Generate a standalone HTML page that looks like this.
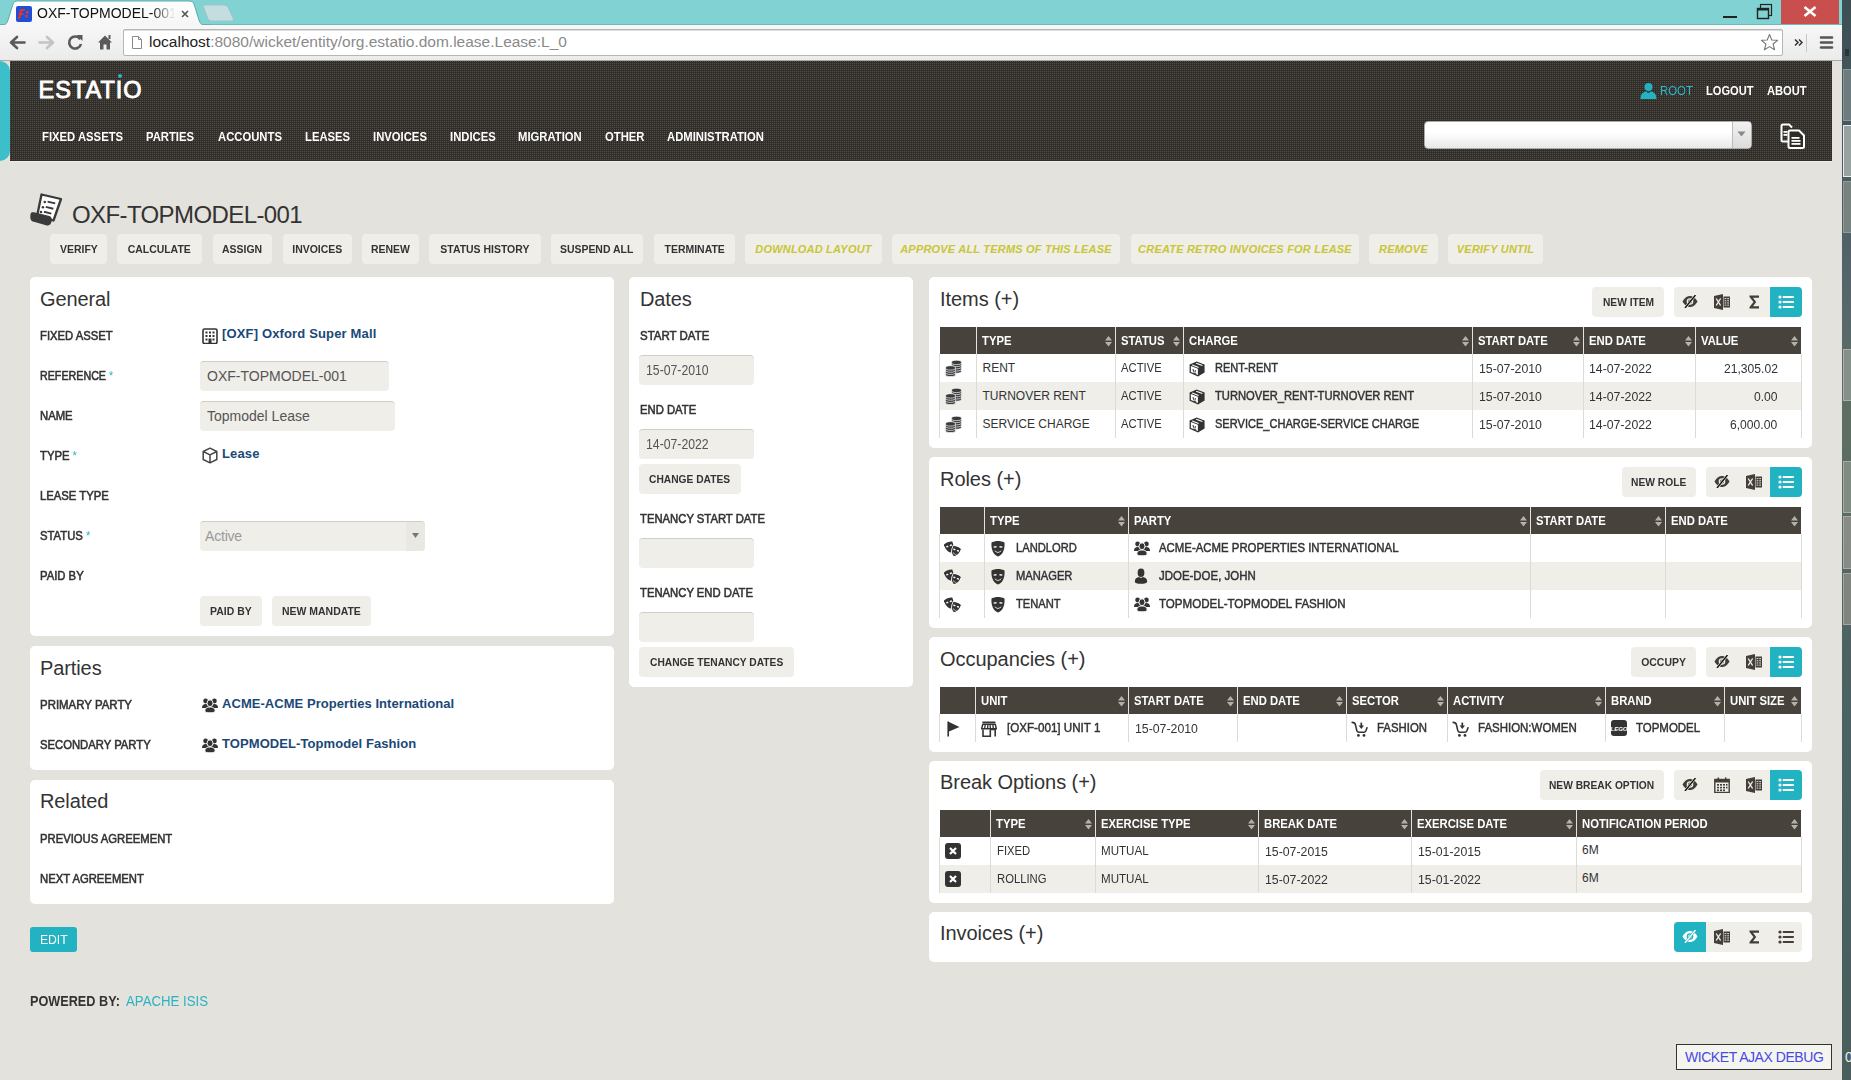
<!DOCTYPE html><html><head><meta charset="utf-8"><title>OXF-TOPMODEL-001</title><style>
*{box-sizing:border-box;margin:0;padding:0}
html,body{width:1851px;height:1080px;overflow:hidden}
body{position:relative;font-family:"Liberation Sans",sans-serif;background:#e3e2dc;color:#333}
.a{position:absolute}
.t{position:absolute;white-space:nowrap;line-height:1}
.p{position:absolute;background:#fff;border-radius:5px}
.b{position:absolute;background:#efeee9;border-radius:4px;font-size:11px;font-weight:bold;line-height:30px;height:30px;color:#333;text-align:center;white-space:nowrap}
.hdr{background-color:#312c28;background-image:radial-gradient(circle at 1px 1px, rgba(255,255,255,.10) 0.6px, transparent 0.9px);background-size:2px 2px}
</style></head><body>
<div class="a" style="left:1842px;top:0px;width:9px;height:1080px;background:linear-gradient(#3c4f55 0px,#56676a 300px,#5f6e62 420px,#5a6a64 520px,#4c6362 650px,#486060 900px,#4a5e5c 1080px);"></div>
<div class="a" style="left:1843px;top:69px;width:8px;height:52px;background:#6f7c7e;border:1px solid #8b9799;border-right:none"></div>
<div class="a" style="left:1843px;top:125px;width:8px;height:52px;background:#9aa2a1;border:1px solid #e8ecec;border-right:none"></div>
<div class="a" style="left:1843px;top:181px;width:8px;height:52px;background:#78827f;border:1px solid #929b98;border-right:none"></div>
<div class="a" style="left:1843px;top:349px;width:8px;height:52px;background:#878f8b;border:1px solid #a9b0ac;border-right:none"></div>
<div class="a" style="left:1843px;top:461px;width:8px;height:52px;background:#808b81;border:1px solid #a3ada3;border-right:none"></div>
<div class="a" style="left:1843px;top:516px;width:8px;height:53px;background:#878c86;border:1px solid #a7aca6;border-right:none"></div>
<div class="a" style="left:1843px;top:573px;width:8px;height:52px;background:#80867f;border:1px solid #a2a8a1;border-right:none"></div>
<div class="a" style="left:1845px;top:49px;width:4px;height:7px;background:#2a3538;"></div>
<div class="a" style="left:0px;top:0px;width:1842px;height:25px;background:#80d3d2;"></div>
<div class="a" style="left:0px;top:24px;width:1842px;height:1px;background:#6bbab9;"></div>
<svg class="a" style="left:0px;top:0px;" width="220" height="26" viewBox="0 0 220 26"><path d="M0 25 L2 25 C6 25 7 23 8 20 L13 4 C14 2 15 1 18 1 L189 1 C192 1 193 2 194 4 L199 20 C200 23 201 25 205 25 L210 25 L210 26 L0 26Z" fill="url(#tabg)" stroke="#5fa9a9" stroke-width="1"/><defs><linearGradient id="tabg" x1="0" y1="0" x2="0" y2="1"><stop offset="0" stop-color="#fff"/><stop offset="1" stop-color="#f5f5f5"/></linearGradient></defs></svg>
<svg class="a" style="left:200px;top:4px;" width="36" height="18" viewBox="0 0 36 18"><path d="M3 2 C3 1 4 1 5 1 L24 1 C26 1 27 2 28 3 L33 14 C34 16 33 17 31 17 L12 17 C10 17 9 16 8 15 Z" fill="#c4dde0" stroke="#9fc4c7" stroke-width="1"/></svg>
<svg class="a" style="left:16px;top:6px;" width="16" height="16" viewBox="0 0 16 16"><rect x="0" y="0" width="16" height="16" rx="2" fill="#1f4fd8"/><path d="M4 3 L9 3 L8.4 5 L6 5 L5.6 7 L7.6 7 L7 9 L5 9 L4 13 L2 13 Z" fill="#e8351e"/><rect x="10" y="5" width="2.6" height="2.6" fill="#e8351e"/><rect x="9.2" y="9" width="2.6" height="2.6" fill="#e8351e"/></svg>
<div class="t" style="left:37px;top:4.5px;font-size:14px;color:#111;width:138px;overflow:hidden;line-height:16px;-webkit-mask-image:linear-gradient(90deg,#000 84%,transparent);">OXF-TOPMODEL-001</div>
<svg class="a" style="left:181px;top:10px;" width="8" height="8" viewBox="0 0 8 8"><path d="M1 1L7 7M7 1L1 7" stroke="#555" stroke-width="1.6"/></svg>
<div class="a" style="left:1781px;top:0px;width:58px;height:24px;background:#c94f4f;"></div>
<svg class="a" style="left:1802px;top:5px;" width="16" height="13" viewBox="0 0 16 13"><path d="M2.5 2 L13.5 11 M13.5 2 L2.5 11" stroke="#fff" stroke-width="2.6"/></svg>
<div class="a" style="left:1723px;top:16px;width:14px;height:2px;background:#222;"></div>
<svg class="a" style="left:1756px;top:3px;" width="17" height="17" viewBox="0 0 17 17"><rect x="4.5" y="1.5" width="11" height="11" fill="none" stroke="#222" stroke-width="1.2"/><rect x="1.5" y="5.5" width="11" height="10" fill="#80d3d2" stroke="#222" stroke-width="1.4"/><rect x="1" y="5" width="12" height="2.5" fill="#222"/></svg>
<div class="a" style="left:0px;top:25px;width:1842px;height:35px;background:linear-gradient(#f7f7f7,#ebebeb);"></div>
<div class="a" style="left:0px;top:60px;width:1842px;height:1px;background:#a9a9a9;"></div>
<svg class="a" style="left:9px;top:35px;" width="17" height="15" viewBox="0 0 17 15"><path d="M8 2 L2 7.5 L8 13 M2.5 7.5 L15.5 7.5" fill="none" stroke="#5a5a5a" stroke-width="2.6" stroke-linecap="round" stroke-linejoin="round"/></svg>
<svg class="a" style="left:38px;top:35px;" width="17" height="15" viewBox="0 0 17 15"><path d="M9 2 L15 7.5 L9 13 M14.5 7.5 L1.5 7.5" fill="none" stroke="#c4c4c4" stroke-width="2.6" stroke-linecap="round" stroke-linejoin="round"/></svg>
<svg class="a" style="left:67px;top:34px;" width="17" height="17" viewBox="0 0 17 17"><path d="M13.2 5.2 A6 6 0 1 0 14 10" fill="none" stroke="#5a5a5a" stroke-width="2.6"/><path d="M9.5 1 L15.5 1 L15.5 7 Z" fill="#5a5a5a"/></svg>
<svg class="a" style="left:97px;top:34px;" width="16" height="17" viewBox="0 0 16 17"><path d="M8 1.5 L1 8.5 L3 8.5 L3 15.5 L6.5 15.5 L6.5 10.5 L9.5 10.5 L9.5 15.5 L13 15.5 L13 8.5 L15 8.5 Z" fill="#5a5a5a"/><rect x="11.5" y="1" width="2" height="4" fill="#5a5a5a"/></svg>
<div class="a" style="left:123px;top:29px;width:1660px;height:27px;background:#fff;border:1px solid #b6b6b6;border-radius:2px;box-shadow:inset 0 1px 0 #ddd"></div>
<svg class="a" style="left:131px;top:35px;" width="12" height="15" viewBox="0 0 12 15"><path d="M1.5 1.5 L7.5 1.5 L10.5 4.5 L10.5 13.5 L1.5 13.5 Z M7.5 1.5 L7.5 4.5 L10.5 4.5" fill="#fff" stroke="#8a8a8a" stroke-width="1"/></svg>
<div class="t" style="left:149px;top:33px;font-size:15.5px;line-height:17px;color:#8a8a8a;letter-spacing:0px"><span style="color:#222">localhost</span>:8080/wicket/entity/org.estatio.dom.lease.Lease:L_0</div>
<svg class="a" style="left:1760px;top:33px;" width="19" height="19" viewBox="0 0 19 19"><path d="M9.5 1.5 L11.8 7 L17.6 7.3 L13.1 11 L14.6 16.8 L9.5 13.6 L4.4 16.8 L5.9 11 L1.4 7.3 L7.2 7 Z" fill="#fff" stroke="#777" stroke-width="1.1" stroke-linejoin="round"/></svg>
<svg class="a" style="left:1794px;top:38px;" width="10" height="9" viewBox="0 0 10 9"><path d="M1 1.5 L4 4.5 L1 7.5 M5 1.5 L8 4.5 L5 7.5" fill="none" stroke="#333" stroke-width="1.5"/></svg>
<div class="a" style="left:1806px;top:34px;width:1px;height:18px;background:#c8c8c8;"></div>
<svg class="a" style="left:1819px;top:35px;" width="15" height="15" viewBox="0 0 15 15"><path d="M2 2.5 H13 M2 7.5 H13 M2 12.5 H13" stroke="#555" stroke-width="2.6" stroke-linecap="round"/></svg>
<div class="a" style="left:0px;top:61px;width:10px;height:100px;background:#3dbfcb;border-radius:0 10px 10px 0"></div>
<svg class="a" style="left:10px;top:61px" width="1822" height="100"><defs><pattern id="hp" width="2" height="2" patternUnits="userSpaceOnUse"><rect width="2" height="2" fill="#312d29"/><rect x="0" y="0" width="1" height="1" fill="#544f49"/></pattern></defs><rect width="1822" height="100" fill="url(#hp)"/></svg>
<div class="a" style="left:10px;top:161px;width:1822px;height:1px;background:#eeede7;"></div>
<div class="t" style="left:38.5px;top:78.94px;font-size:23.5px;font-weight:normal;color:#fff;letter-spacing:1.0px;font-style:normal;-webkit-text-stroke:0.9px #fff;">ESTATIO</div>
<div class="a" style="left:118px;top:74px;width:4px;height:4px;background:#2bb4c4;border-radius:50%"></div>
<div class="t" style="left:42px;top:130.94px;font-size:12px;font-weight:bold;color:#fff;letter-spacing:0px;font-style:normal;transform:scaleX(0.94);transform-origin:0 0;">FIXED ASSETS</div>
<div class="t" style="left:146px;top:130.94px;font-size:12px;font-weight:bold;color:#fff;letter-spacing:0px;font-style:normal;transform:scaleX(0.94);transform-origin:0 0;">PARTIES</div>
<div class="t" style="left:218px;top:130.94px;font-size:12px;font-weight:bold;color:#fff;letter-spacing:0px;font-style:normal;transform:scaleX(0.94);transform-origin:0 0;">ACCOUNTS</div>
<div class="t" style="left:305px;top:130.94px;font-size:12px;font-weight:bold;color:#fff;letter-spacing:0px;font-style:normal;transform:scaleX(0.94);transform-origin:0 0;">LEASES</div>
<div class="t" style="left:373px;top:130.94px;font-size:12px;font-weight:bold;color:#fff;letter-spacing:0px;font-style:normal;transform:scaleX(0.94);transform-origin:0 0;">INVOICES</div>
<div class="t" style="left:450px;top:130.94px;font-size:12px;font-weight:bold;color:#fff;letter-spacing:0px;font-style:normal;transform:scaleX(0.94);transform-origin:0 0;">INDICES</div>
<div class="t" style="left:518px;top:130.94px;font-size:12px;font-weight:bold;color:#fff;letter-spacing:0px;font-style:normal;transform:scaleX(0.94);transform-origin:0 0;">MIGRATION</div>
<div class="t" style="left:605px;top:130.94px;font-size:12px;font-weight:bold;color:#fff;letter-spacing:0px;font-style:normal;transform:scaleX(0.94);transform-origin:0 0;">OTHER</div>
<div class="t" style="left:667px;top:130.94px;font-size:12px;font-weight:bold;color:#fff;letter-spacing:0px;font-style:normal;transform:scaleX(0.94);transform-origin:0 0;">ADMINISTRATION</div>
<svg class="a" style="left:1640px;top:82px;" width="17" height="17" viewBox="0 0 17 17"><circle cx="8.5" cy="5" r="4" fill="#21b3c1"/><path d="M0.5 17 C0.5 12 3 10 6 9.5 L8.5 11 L11 9.5 C14 10 16.5 12 16.5 17 Z" fill="#21b3c1"/></svg>
<div class="t" style="left:1660px;top:84.94px;font-size:12px;font-weight:normal;color:#2ab3c2;letter-spacing:0px;font-style:normal;transform:scaleX(0.95);transform-origin:0 0;">ROOT</div>
<div class="t" style="left:1706px;top:84.94px;font-size:12px;font-weight:bold;color:#fff;letter-spacing:0px;font-style:normal;transform:scaleX(0.925);transform-origin:0 0;">LOGOUT</div>
<div class="t" style="left:1767px;top:84.94px;font-size:12px;font-weight:bold;color:#fff;letter-spacing:0px;font-style:normal;transform:scaleX(0.93);transform-origin:0 0;">ABOUT</div>
<div class="a" style="left:1424px;top:121px;width:328px;height:28px;border-radius:4px;background:linear-gradient(#fff 40%,#e9e9e9);border:1px solid #aaa"></div>
<div class="a" style="left:1732px;top:122px;width:19px;height:26px;border-left:1px solid #bbb;background:linear-gradient(#f2f2f2,#dcdcdc);border-radius:0 3px 3px 0"></div>
<svg class="a" style="left:1737px;top:131px;" width="9" height="6" viewBox="0 0 9 6"><path d="M0.5 0.5 L8.5 0.5 L4.5 5.5 Z" fill="#888"/></svg>
<svg class="a" style="left:1780px;top:122px;" width="28" height="28" viewBox="0 0 28 28"><path d="M3 2.5 C2 2.5 1.5 3 1.5 4 L1.5 18 C1.5 19 2 19.5 3 19.5 L8 19.5 M3 2.5 L9 2.5 L12 5.5" fill="none" stroke="#fff" stroke-width="2"/><rect x="3.5" y="9" width="4" height="1.8" fill="#fff"/><rect x="3.5" y="12" width="4" height="1.8" fill="#fff"/><path d="M10 8.5 C9 8.5 8.5 9 8.5 10 L8.5 24.5 C8.5 25.5 9 26 10 26 L22.5 26 C23.5 26 24 25.5 24 24.5 L24 13.5 L19 8.5 Z" fill="#2f2b27" stroke="#fff" stroke-width="2"/><rect x="11.5" y="15" width="8" height="1.8" fill="#fff"/><rect x="11.5" y="18" width="9" height="1.8" fill="#fff"/><rect x="11.5" y="21" width="9" height="1.8" fill="#fff"/></svg>
<svg class="a" style="left:29px;top:193px;" width="34" height="34" viewBox="0 0 34 34"><path d="M12.5 1.5 L32 6 L24.5 27.5 L8 23.5 Z" fill="#fff" stroke="#3a3a3a" stroke-width="2.3" stroke-linejoin="round"/><path d="M1.5 21.5 C1.5 19.5 3 19 5 19.3 L19.5 22.8 C22.5 23.5 23.5 26 22.5 29 C21.5 32 19.5 33 17 32.3 L4 28.5 C1.5 27.8 1 25 1.5 21.5 Z" fill="#3a3a3a"/><g fill="#3a3a3a"><circle cx="15.8" cy="9" r="1.3"/><circle cx="13.9" cy="14.3" r="1.3"/><circle cx="12" cy="19" r="1.3"/><path d="M18.6 8.6 L26.2 10.4" stroke="#3a3a3a" stroke-width="2"/><path d="M16.8 13.9 L24.4 15.7" stroke="#3a3a3a" stroke-width="2"/><path d="M15 18.8 L22.3 20.6" stroke="#3a3a3a" stroke-width="2"/></g></svg>
<div class="t" style="left:72px;top:202.88px;font-size:24px;font-weight:normal;color:#333;letter-spacing:-0.6px;font-style:normal;">OXF-TOPMODEL-001</div>
<div class="b" style="left:50px;top:234px;width:57px;height:30px;line-height:30px;color:#333;letter-spacing:0px;font-size:11px;"><span style="display:inline-block;transform:scaleX(0.95)">VERIFY</span></div>
<div class="b" style="left:117px;top:234px;width:85px;height:30px;line-height:30px;color:#333;letter-spacing:0px;font-size:11px;"><span style="display:inline-block;transform:scaleX(0.95)">CALCULATE</span></div>
<div class="b" style="left:213px;top:234px;width:59px;height:30px;line-height:30px;color:#333;letter-spacing:0px;font-size:11px;"><span style="display:inline-block;transform:scaleX(0.95)">ASSIGN</span></div>
<div class="b" style="left:283px;top:234px;width:69px;height:30px;line-height:30px;color:#333;letter-spacing:0px;font-size:11px;"><span style="display:inline-block;transform:scaleX(0.95)">INVOICES</span></div>
<div class="b" style="left:362px;top:234px;width:57px;height:30px;line-height:30px;color:#333;letter-spacing:0px;font-size:11px;"><span style="display:inline-block;transform:scaleX(0.95)">RENEW</span></div>
<div class="b" style="left:429px;top:234px;width:112px;height:30px;line-height:30px;color:#333;letter-spacing:0px;font-size:11px;"><span style="display:inline-block;transform:scaleX(0.95)">STATUS HISTORY</span></div>
<div class="b" style="left:551px;top:234px;width:92px;height:30px;line-height:30px;color:#333;letter-spacing:0px;font-size:11px;"><span style="display:inline-block;transform:scaleX(0.95)">SUSPEND ALL</span></div>
<div class="b" style="left:654px;top:234px;width:81px;height:30px;line-height:30px;color:#333;letter-spacing:0px;font-size:11px;"><span style="display:inline-block;transform:scaleX(0.95)">TERMINATE</span></div>
<div class="b" style="left:745px;top:234px;width:137px;height:30px;line-height:30px;color:#c8c637;letter-spacing:0.2px;font-size:11px;font-style:italic;"><span style="display:inline-block;transform:scaleX(1)">DOWNLOAD LAYOUT</span></div>
<div class="b" style="left:892px;top:234px;width:228px;height:30px;line-height:30px;color:#c8c637;letter-spacing:0.2px;font-size:11px;font-style:italic;"><span style="display:inline-block;transform:scaleX(1)">APPROVE ALL TERMS OF THIS LEASE</span></div>
<div class="b" style="left:1131px;top:234px;width:228px;height:30px;line-height:30px;color:#c8c637;letter-spacing:0.2px;font-size:11px;font-style:italic;"><span style="display:inline-block;transform:scaleX(1)">CREATE RETRO INVOICES FOR LEASE</span></div>
<div class="b" style="left:1369px;top:234px;width:69px;height:30px;line-height:30px;color:#c8c637;letter-spacing:0.2px;font-size:11px;font-style:italic;"><span style="display:inline-block;transform:scaleX(1)">REMOVE</span></div>
<div class="b" style="left:1448px;top:234px;width:95px;height:30px;line-height:30px;color:#c8c637;letter-spacing:0.2px;font-size:11px;font-style:italic;"><span style="display:inline-block;transform:scaleX(1)">VERIFY UNTIL</span></div>
<div class="p" style="left:30px;top:277px;width:584px;height:359px"></div>
<div class="p" style="left:629px;top:277px;width:284px;height:410px"></div>
<div class="p" style="left:30px;top:646px;width:584px;height:124px"></div>
<div class="p" style="left:30px;top:780px;width:584px;height:124px"></div>
<div class="t" style="left:40px;top:289.4px;font-size:20px;font-weight:normal;color:#333;letter-spacing:-0.1px;font-style:normal;">General</div>
<div class="t" style="left:40px;top:330.24px;font-size:12px;font-weight:normal;color:#333;letter-spacing:0px;font-style:normal;transform:scaleX(0.9385);transform-origin:0 0;-webkit-text-stroke:0.55px #333;">FIXED ASSET</div>
<svg class="a" style="left:202px;top:328px;" width="16" height="16" viewBox="0 0 16 16"><rect x="1" y="1" width="14" height="14.5" rx="1.5" fill="#fff" stroke="#333" stroke-width="1.6"/><g fill="#333"><rect x="3.5" y="3.5" width="2" height="2"/><rect x="7" y="3.5" width="2" height="2"/><rect x="10.5" y="3.5" width="2" height="2"/><rect x="3.5" y="7" width="2" height="2"/><rect x="7" y="7" width="2" height="2"/><rect x="10.5" y="7" width="2" height="2"/><rect x="3.5" y="10.5" width="2" height="2"/><rect x="10.5" y="10.5" width="2" height="2"/><rect x="6.5" y="10.5" width="3" height="5"/></g></svg>
<div class="t" style="left:222px;top:327.31px;font-size:13px;font-weight:bold;color:#1a4877;letter-spacing:0.15px;font-style:normal;">[OXF] Oxford Super Mall</div>
<div class="t" style="left:40px;top:370.24px;font-size:12px;font-weight:normal;color:#333;letter-spacing:0px;font-style:normal;transform:scaleX(0.8917);transform-origin:0 0;-webkit-text-stroke:0.55px #333;">REFERENCE <span style="color:#2ab3c2;-webkit-text-stroke:0">*</span></div>
<div class="a" style="left:200px;top:361px;width:189px;height:30px;background:#efeee9;border-radius:4px;border-top:1px solid #cfcdc6"></div>
<div class="t" style="left:207px;top:369.18px;font-size:14px;font-weight:normal;color:#555;letter-spacing:0px;font-style:normal;">OXF-TOPMODEL-001</div>
<div class="t" style="left:40px;top:410.24px;font-size:12px;font-weight:normal;color:#333;letter-spacing:0px;font-style:normal;transform:scaleX(0.94);transform-origin:0 0;-webkit-text-stroke:0.55px #333;">NAME</div>
<div class="a" style="left:200px;top:401px;width:195px;height:30px;background:#efeee9;border-radius:4px;border-top:1px solid #cfcdc6"></div>
<div class="t" style="left:207px;top:409.18px;font-size:14px;font-weight:normal;color:#555;letter-spacing:0px;font-style:normal;">Topmodel Lease</div>
<div class="t" style="left:40px;top:450.24px;font-size:12px;font-weight:normal;color:#333;letter-spacing:0px;font-style:normal;transform:scaleX(0.94);transform-origin:0 0;-webkit-text-stroke:0.55px #333;">TYPE <span style="color:#2ab3c2;-webkit-text-stroke:0">*</span></div>
<svg class="a" style="left:202px;top:447px;" width="16" height="17" viewBox="0 0 16 17"><path d="M8 1.2 L14.8 4.5 L14.8 12.5 L8 15.8 L1.2 12.5 L1.2 4.5 Z M1.2 4.5 L8 7.8 L14.8 4.5 M8 7.8 L8 15.8" fill="none" stroke="#444" stroke-width="1.5" stroke-linejoin="round"/></svg>
<div class="t" style="left:222px;top:447.31px;font-size:13px;font-weight:bold;color:#1a4877;letter-spacing:0.15px;font-style:normal;">Lease</div>
<div class="t" style="left:40px;top:490.24px;font-size:12px;font-weight:normal;color:#333;letter-spacing:0px;font-style:normal;transform:scaleX(0.94);transform-origin:0 0;-webkit-text-stroke:0.55px #333;">LEASE TYPE</div>
<div class="t" style="left:40px;top:530.24px;font-size:12px;font-weight:normal;color:#333;letter-spacing:0px;font-style:normal;transform:scaleX(0.94);transform-origin:0 0;-webkit-text-stroke:0.55px #333;">STATUS <span style="color:#2ab3c2;-webkit-text-stroke:0">*</span></div>
<div class="a" style="left:200px;top:521px;width:225px;height:30px;background:#efeee9;border-radius:4px;border-top:1px solid #cfcdc6"></div>
<div class="a" style="left:406px;top:522px;width:19px;height:29px;background:#e9e8e2;border-radius:0 4px 4px 0"></div>
<svg class="a" style="left:412px;top:533px;" width="7" height="5" viewBox="0 0 7 5"><path d="M0 0 L7 0 L3.5 5 Z" fill="#777"/></svg>
<div class="t" style="left:205px;top:529.18px;font-size:14px;font-weight:normal;color:#999;letter-spacing:-0.2px;font-style:normal;">Active</div>
<div class="t" style="left:40px;top:570.24px;font-size:12px;font-weight:normal;color:#333;letter-spacing:0px;font-style:normal;transform:scaleX(0.94);transform-origin:0 0;-webkit-text-stroke:0.55px #333;">PAID BY</div>
<div class="b" style="left:200px;top:596px;width:62px;height:30px;line-height:30px;color:#333;letter-spacing:0px;font-size:11px;"><span style="display:inline-block;transform:scaleX(0.95)">PAID BY</span></div>
<div class="b" style="left:272px;top:596px;width:99px;height:30px;line-height:30px;color:#333;letter-spacing:0px;font-size:11px;"><span style="display:inline-block;transform:scaleX(0.95)">NEW MANDATE</span></div>
<div class="t" style="left:40px;top:658.4px;font-size:20px;font-weight:normal;color:#333;letter-spacing:-0.1px;font-style:normal;">Parties</div>
<div class="t" style="left:40px;top:699.24px;font-size:12px;font-weight:normal;color:#333;letter-spacing:0px;font-style:normal;transform:scaleX(0.9536);transform-origin:0 0;-webkit-text-stroke:0.55px #333;">PRIMARY PARTY</div>
<div class="t" style="left:40px;top:739.24px;font-size:12px;font-weight:normal;color:#333;letter-spacing:0px;font-style:normal;transform:scaleX(0.9396);transform-origin:0 0;-webkit-text-stroke:0.55px #333;">SECONDARY PARTY</div>
<svg class="a" style="left:202px;top:697px;" width="16" height="16" viewBox="0 0 16 16"><g fill="#333"><circle cx="3.6" cy="4" r="2.4"/><circle cx="12.4" cy="4" r="2.4"/><path d="M0 11 C0 8 1.5 7 3.6 7 C5.7 7 7 8 7 11 Z"/><path d="M9 11 C9 8 10.3 7 12.4 7 C14.5 7 16 8 16 11 Z"/><ellipse cx="8" cy="6.2" rx="3" ry="3.4" stroke="#fff" stroke-width="0.9"/><path d="M2.8 14 C2.8 11 5 10 8 10 C11 10 13.2 11 13.2 14 C13.2 15.3 11 15.8 8 15.8 C5 15.8 2.8 15.3 2.8 14Z" stroke="#fff" stroke-width="0.9"/></g></svg>
<div class="t" style="left:222px;top:697.31px;font-size:13px;font-weight:bold;color:#1a4877;letter-spacing:0.05px;font-style:normal;">ACME-ACME Properties International</div>
<svg class="a" style="left:202px;top:737px;" width="16" height="16" viewBox="0 0 16 16"><g fill="#333"><circle cx="3.6" cy="4" r="2.4"/><circle cx="12.4" cy="4" r="2.4"/><path d="M0 11 C0 8 1.5 7 3.6 7 C5.7 7 7 8 7 11 Z"/><path d="M9 11 C9 8 10.3 7 12.4 7 C14.5 7 16 8 16 11 Z"/><ellipse cx="8" cy="6.2" rx="3" ry="3.4" stroke="#fff" stroke-width="0.9"/><path d="M2.8 14 C2.8 11 5 10 8 10 C11 10 13.2 11 13.2 14 C13.2 15.3 11 15.8 8 15.8 C5 15.8 2.8 15.3 2.8 14Z" stroke="#fff" stroke-width="0.9"/></g></svg>
<div class="t" style="left:222px;top:737.31px;font-size:13px;font-weight:bold;color:#1a4877;letter-spacing:0.08px;font-style:normal;">TOPMODEL-Topmodel Fashion</div>
<div class="t" style="left:40px;top:791.4px;font-size:20px;font-weight:normal;color:#333;letter-spacing:-0.1px;font-style:normal;">Related</div>
<div class="t" style="left:40px;top:833.24px;font-size:12px;font-weight:normal;color:#333;letter-spacing:0px;font-style:normal;transform:scaleX(0.94);transform-origin:0 0;-webkit-text-stroke:0.55px #333;">PREVIOUS AGREEMENT</div>
<div class="t" style="left:40px;top:873.24px;font-size:12px;font-weight:normal;color:#333;letter-spacing:0px;font-style:normal;transform:scaleX(0.94);transform-origin:0 0;-webkit-text-stroke:0.55px #333;">NEXT AGREEMENT</div>
<div class="t" style="left:640px;top:289.4px;font-size:20px;font-weight:normal;color:#333;letter-spacing:-0.1px;font-style:normal;">Dates</div>
<div class="t" style="left:640px;top:330.24px;font-size:12px;font-weight:normal;color:#333;letter-spacing:0px;font-style:normal;transform:scaleX(0.9564);transform-origin:0 0;-webkit-text-stroke:0.55px #333;">START DATE</div>
<div class="a" style="left:639px;top:355px;width:115px;height:30px;background:#efeee9;border-radius:4px;border-top:1px solid #cfcdc6"></div>
<div class="t" style="left:646px;top:363.18px;font-size:14px;font-weight:normal;color:#555;letter-spacing:0px;font-style:normal;transform:scaleX(0.875);transform-origin:0 0;">15-07-2010</div>
<div class="t" style="left:640px;top:404.24px;font-size:12px;font-weight:normal;color:#333;letter-spacing:0px;font-style:normal;transform:scaleX(0.94);transform-origin:0 0;-webkit-text-stroke:0.55px #333;">END DATE</div>
<div class="a" style="left:639px;top:429px;width:115px;height:30px;background:#efeee9;border-radius:4px;border-top:1px solid #cfcdc6"></div>
<div class="t" style="left:646px;top:437.18px;font-size:14px;font-weight:normal;color:#555;letter-spacing:0px;font-style:normal;transform:scaleX(0.875);transform-origin:0 0;">14-07-2022</div>
<div class="b" style="left:639px;top:464px;width:102px;height:30px;line-height:30px;color:#333;letter-spacing:0px;font-size:11px;"><span style="display:inline-block;transform:scaleX(0.93)">CHANGE DATES</span></div>
<div class="t" style="left:640px;top:513.24px;font-size:12px;font-weight:normal;color:#333;letter-spacing:0px;font-style:normal;transform:scaleX(0.94);transform-origin:0 0;-webkit-text-stroke:0.55px #333;">TENANCY START DATE</div>
<div class="a" style="left:639px;top:538px;width:115px;height:30px;background:#efeee9;border-radius:4px;border-top:1px solid #cfcdc6"></div>
<div class="t" style="left:640px;top:587.24px;font-size:12px;font-weight:normal;color:#333;letter-spacing:0px;font-style:normal;transform:scaleX(0.94);transform-origin:0 0;-webkit-text-stroke:0.55px #333;">TENANCY END DATE</div>
<div class="a" style="left:639px;top:612px;width:115px;height:30px;background:#efeee9;border-radius:4px;border-top:1px solid #cfcdc6"></div>
<div class="b" style="left:639px;top:647px;width:155px;height:30px;line-height:30px;color:#333;letter-spacing:0px;font-size:11px;"><span style="display:inline-block;transform:scaleX(0.93)">CHANGE TENANCY DATES</span></div>
<div class="a" style="left:30px;top:927px;width:47px;height:25px;background:#21b3c1;border-radius:3px;color:#fff;font-size:13px;line-height:25px;text-align:center"><span style="display:inline-block;transform:scaleX(0.94)">EDIT</span></div>
<div class="t" style="left:30px;top:994.18px;font-size:14px;font-weight:bold;color:#333;letter-spacing:0px;font-style:normal;transform:scaleX(0.905);transform-origin:0 0;">POWERED BY:</div>
<div class="t" style="left:125.5px;top:994.18px;font-size:14px;font-weight:normal;color:#2ab3c2;letter-spacing:0px;font-style:normal;transform:scaleX(0.945);transform-origin:0 0;">APACHE ISIS</div>
<div class="a" style="left:1676px;top:1044px;width:156px;height:26px;background:#f5f5ef;border:1px solid #333"></div>
<div class="t" style="left:1685px;top:1050.18px;font-size:14px;font-weight:normal;color:#4848e6;letter-spacing:-0.45px;font-style:normal;">WICKET AJAX DEBUG</div>
<div class="t" style="left:1845px;top:1050.18px;font-size:14px;font-weight:normal;color:#eee;letter-spacing:0px;font-style:normal;">0</div>
<div class="p" style="left:929px;top:277px;width:883px;height:171px"></div>
<div class="t" style="left:940px;top:289.4px;font-size:20px;font-weight:normal;color:#333;letter-spacing:-0.05px;font-style:normal;">Items (+)</div>
<div class="b" style="left:1592px;top:287px;width:72px;height:30px;line-height:30px;color:#333;letter-spacing:0px;font-size:11px;"><span style="display:inline-block;transform:scaleX(0.93)">NEW ITEM</span></div>
<div class="a" style="left:1674px;top:287px;width:128px;height:30px;background:#efeee9;border-radius:4px;overflow:hidden">
<div class="a" style="left:0px;top:0;width:32px;height:30px;background:transparent"></div>
<div class="a" style="left:32px;top:0;width:32px;height:30px;background:transparent"></div>
<div class="a" style="left:64px;top:0;width:32px;height:30px;background:transparent"></div>
<div class="a" style="left:96px;top:0;width:32px;height:30px;background:#21b3c1"></div>
</div>
<svg class="a" style="left:1682px;top:295px;" width="16" height="13" viewBox="0 -0.5 16 13"><path d="M0.5 6 C3 1.5 6 0.5 8 0.5 C10 0.5 13 1.5 15.5 6 C13 10.5 10 11.5 8 11.5 C6 11.5 3 10.5 0.5 6Z" fill="#433e38"/><circle cx="8" cy="6" r="2.6" fill="none" stroke="#efeee9" stroke-width="1.4"/><path d="M3 12.5 L13.5 -0.5" stroke="#efeee9" stroke-width="2.6"/><path d="M3 12.5 L13.5 -0.5" stroke="#111" stroke-width="1.4"/></svg>
<svg class="a" style="left:1714px;top:294px;" width="16" height="16" viewBox="0 0 16 16"><path d="M0 2 L9 0 L9 16 L0 14Z" fill="#433e38"/><path d="M2.2 4.5 L6.6 11.5 M6.6 4.5 L2.2 11.5" stroke="#efeee9" stroke-width="1.4"/><rect x="9.5" y="2.5" width="6.5" height="11" fill="#433e38"/><g fill="#efeee9" opacity="0.85"><rect x="10.6" y="4" width="4.4" height="1.1"/><rect x="10.6" y="6.2" width="4.4" height="1.1"/><rect x="10.6" y="8.4" width="4.4" height="1.1"/><rect x="10.6" y="10.6" width="4.4" height="1.1"/></g><rect x="12.3" y="3.5" width="0.9" height="9" fill="#433e38"/></svg>
<svg class="a" style="left:1749px;top:295px;" width="11" height="14" viewBox="0 0 11 14"><path d="M0.5 0.5 L10 0.5 L10 2.8 L4 2.8 L7.2 7 L4 11.2 L10 11.2 L10 13.5 L0.5 13.5 L0.5 12 L4.5 7 L0.5 2 Z" fill="#433e38"/></svg>
<svg class="a" style="left:1778px;top:295px;" width="16" height="14" viewBox="0 0 16 14"><g fill="#fff"><circle cx="2" cy="2" r="1.6"/><circle cx="2" cy="7" r="1.6"/><circle cx="2" cy="12" r="1.6"/><rect x="4.8" y="1" width="11" height="2"/><rect x="4.8" y="6" width="11" height="2"/><rect x="4.8" y="11" width="11" height="2"/></g></svg>
<div class="a" style="left:940px;top:327px;width:861px;height:27px;background:#47423c;"></div>
<div class="a" style="left:976px;top:327px;width:1px;height:27px;background:#e4e2de;"></div>
<div class="a" style="left:1115px;top:327px;width:1px;height:27px;background:#e4e2de;"></div>
<div class="a" style="left:1183px;top:327px;width:1px;height:27px;background:#e4e2de;"></div>
<div class="a" style="left:1472px;top:327px;width:1px;height:27px;background:#e4e2de;"></div>
<div class="a" style="left:1583px;top:327px;width:1px;height:27px;background:#e4e2de;"></div>
<div class="a" style="left:1695px;top:327px;width:1px;height:27px;background:#e4e2de;"></div>
<div class="t" style="left:982px;top:334.64px;font-size:12px;font-weight:bold;color:#fff;letter-spacing:0px;font-style:normal;transform:scaleX(0.94);transform-origin:0 0;">TYPE</div>
<svg class="a" style="left:1105px;top:336px;" width="7" height="11" viewBox="0 0 7 11"><path d="M0 4.5 L3.5 0 L7 4.5Z M0 6 L3.5 10.5 L7 6Z" fill="#b5b2ad"/></svg>
<div class="t" style="left:1121px;top:334.64px;font-size:12px;font-weight:bold;color:#fff;letter-spacing:0px;font-style:normal;transform:scaleX(0.94);transform-origin:0 0;">STATUS</div>
<svg class="a" style="left:1173px;top:336px;" width="7" height="11" viewBox="0 0 7 11"><path d="M0 4.5 L3.5 0 L7 4.5Z M0 6 L3.5 10.5 L7 6Z" fill="#b5b2ad"/></svg>
<div class="t" style="left:1189px;top:334.64px;font-size:12px;font-weight:bold;color:#fff;letter-spacing:0px;font-style:normal;transform:scaleX(0.94);transform-origin:0 0;">CHARGE</div>
<svg class="a" style="left:1462px;top:336px;" width="7" height="11" viewBox="0 0 7 11"><path d="M0 4.5 L3.5 0 L7 4.5Z M0 6 L3.5 10.5 L7 6Z" fill="#b5b2ad"/></svg>
<div class="t" style="left:1478px;top:334.64px;font-size:12px;font-weight:bold;color:#fff;letter-spacing:0px;font-style:normal;transform:scaleX(0.94);transform-origin:0 0;">START DATE</div>
<svg class="a" style="left:1573px;top:336px;" width="7" height="11" viewBox="0 0 7 11"><path d="M0 4.5 L3.5 0 L7 4.5Z M0 6 L3.5 10.5 L7 6Z" fill="#b5b2ad"/></svg>
<div class="t" style="left:1589px;top:334.64px;font-size:12px;font-weight:bold;color:#fff;letter-spacing:0px;font-style:normal;transform:scaleX(0.94);transform-origin:0 0;">END DATE</div>
<svg class="a" style="left:1685px;top:336px;" width="7" height="11" viewBox="0 0 7 11"><path d="M0 4.5 L3.5 0 L7 4.5Z M0 6 L3.5 10.5 L7 6Z" fill="#b5b2ad"/></svg>
<div class="t" style="left:1701px;top:334.64px;font-size:12px;font-weight:bold;color:#fff;letter-spacing:0px;font-style:normal;transform:scaleX(0.94);transform-origin:0 0;">VALUE</div>
<svg class="a" style="left:1791px;top:336px;" width="7" height="11" viewBox="0 0 7 11"><path d="M0 4.5 L3.5 0 L7 4.5Z M0 6 L3.5 10.5 L7 6Z" fill="#b5b2ad"/></svg>
<div class="a" style="left:940px;top:382px;width:861px;height:28px;background:#efeee9;"></div>
<div class="a" style="left:939px;top:354px;width:1px;height:84px;background:#dcdbd6;"></div>
<div class="a" style="left:976px;top:354px;width:1px;height:84px;background:#dcdbd6;"></div>
<div class="a" style="left:1115px;top:354px;width:1px;height:84px;background:#dcdbd6;"></div>
<div class="a" style="left:1183px;top:354px;width:1px;height:84px;background:#dcdbd6;"></div>
<div class="a" style="left:1472px;top:354px;width:1px;height:84px;background:#dcdbd6;"></div>
<div class="a" style="left:1583px;top:354px;width:1px;height:84px;background:#dcdbd6;"></div>
<div class="a" style="left:1695px;top:354px;width:1px;height:84px;background:#dcdbd6;"></div>
<div class="a" style="left:1801px;top:354px;width:1px;height:84px;background:#dcdbd6;"></div>
<svg class="a" style="left:945px;top:360.0px;" width="17" height="17" viewBox="0 0 17 17"><g fill="#3a3a3a" stroke="#fff" stroke-width="0.7"><ellipse cx="11.5" cy="11" rx="5" ry="2.2"/><ellipse cx="11.5" cy="8.8" rx="5" ry="2.2"/><ellipse cx="11.5" cy="6.6" rx="5" ry="2.2"/><ellipse cx="11.5" cy="4.4" rx="5" ry="2.2"/><ellipse cx="11.5" cy="2.4" rx="5" ry="2.2"/><ellipse cx="5.5" cy="14.4" rx="5" ry="2.2"/><ellipse cx="5.5" cy="12.2" rx="5" ry="2.2"/><ellipse cx="5.5" cy="10" rx="5" ry="2.2"/><ellipse cx="5.5" cy="7.9" rx="5" ry="2.2"/></g></svg>
<div class="t" style="left:982.5px;top:362.14px;font-size:12px;font-weight:normal;color:#333;letter-spacing:0px;font-style:normal;">RENT</div>
<div class="t" style="left:1121px;top:362.14px;font-size:12px;font-weight:normal;color:#333;letter-spacing:0px;font-style:normal;transform:scaleX(0.94);transform-origin:0 0;">ACTIVE</div>
<svg class="a" style="left:1189px;top:361.0px;" width="17" height="17" viewBox="0 0 17 17"><path d="M0.6 3.4 L7.6 0.5 L15.6 3.4 L15.6 11.6 L9 15.6 L0.6 11.8 Z" fill="#333"/><path d="M1.9 5 L8.9 7.7 L8.9 13.9 L1.9 11 Z" fill="#fff"/><path d="M3.2 4 L9.6 6.4 M7.2 2.2 L13.4 4.5" stroke="#fff" stroke-width="1.1"/><path d="M4 8 L4.6 10.8 M6.3 9 L6 11.6 M4.3 12 L7.2 13" stroke="#333" stroke-width="1"/></svg>
<div class="t" style="left:1214.5px;top:362.14px;font-size:12px;font-weight:normal;color:#333;letter-spacing:0px;font-style:normal;transform:scaleX(0.9175);transform-origin:0 0;-webkit-text-stroke:0.45px #333;">RENT-RENT</div>
<div class="t" style="left:1479px;top:362.64px;font-size:12px;font-weight:normal;color:#333;letter-spacing:0px;font-style:normal;transform:scaleX(1.025);transform-origin:0 0;">15-07-2010</div>
<div class="t" style="left:1589px;top:362.64px;font-size:12px;font-weight:normal;color:#333;letter-spacing:0px;font-style:normal;transform:scaleX(1.025);transform-origin:0 0;">14-07-2022</div>
<div class="t" style="left:1723.59px;top:362.64px;font-size:12px;font-weight:normal;color:#333;letter-spacing:0px;font-style:normal;transform:scaleX(1.01);transform-origin:0 0;">21,305.02</div>
<svg class="a" style="left:945px;top:388.0px;" width="17" height="17" viewBox="0 0 17 17"><g fill="#3a3a3a" stroke="#fff" stroke-width="0.7"><ellipse cx="11.5" cy="11" rx="5" ry="2.2"/><ellipse cx="11.5" cy="8.8" rx="5" ry="2.2"/><ellipse cx="11.5" cy="6.6" rx="5" ry="2.2"/><ellipse cx="11.5" cy="4.4" rx="5" ry="2.2"/><ellipse cx="11.5" cy="2.4" rx="5" ry="2.2"/><ellipse cx="5.5" cy="14.4" rx="5" ry="2.2"/><ellipse cx="5.5" cy="12.2" rx="5" ry="2.2"/><ellipse cx="5.5" cy="10" rx="5" ry="2.2"/><ellipse cx="5.5" cy="7.9" rx="5" ry="2.2"/></g></svg>
<div class="t" style="left:982.5px;top:390.14px;font-size:12px;font-weight:normal;color:#333;letter-spacing:0px;font-style:normal;">TURNOVER RENT</div>
<div class="t" style="left:1121px;top:390.14px;font-size:12px;font-weight:normal;color:#333;letter-spacing:0px;font-style:normal;transform:scaleX(0.94);transform-origin:0 0;">ACTIVE</div>
<svg class="a" style="left:1189px;top:389.0px;" width="17" height="17" viewBox="0 0 17 17"><path d="M0.6 3.4 L7.6 0.5 L15.6 3.4 L15.6 11.6 L9 15.6 L0.6 11.8 Z" fill="#333"/><path d="M1.9 5 L8.9 7.7 L8.9 13.9 L1.9 11 Z" fill="#fff"/><path d="M3.2 4 L9.6 6.4 M7.2 2.2 L13.4 4.5" stroke="#fff" stroke-width="1.1"/><path d="M4 8 L4.6 10.8 M6.3 9 L6 11.6 M4.3 12 L7.2 13" stroke="#333" stroke-width="1"/></svg>
<div class="t" style="left:1214.5px;top:390.14px;font-size:12px;font-weight:normal;color:#333;letter-spacing:0px;font-style:normal;transform:scaleX(0.9328);transform-origin:0 0;-webkit-text-stroke:0.45px #333;">TURNOVER_RENT-TURNOVER RENT</div>
<div class="t" style="left:1479px;top:390.64px;font-size:12px;font-weight:normal;color:#333;letter-spacing:0px;font-style:normal;transform:scaleX(1.025);transform-origin:0 0;">15-07-2010</div>
<div class="t" style="left:1589px;top:390.64px;font-size:12px;font-weight:normal;color:#333;letter-spacing:0px;font-style:normal;transform:scaleX(1.025);transform-origin:0 0;">14-07-2022</div>
<div class="t" style="left:1753.91px;top:390.64px;font-size:12px;font-weight:normal;color:#333;letter-spacing:0px;font-style:normal;transform:scaleX(1.01);transform-origin:0 0;">0.00</div>
<svg class="a" style="left:945px;top:416.0px;" width="17" height="17" viewBox="0 0 17 17"><g fill="#3a3a3a" stroke="#fff" stroke-width="0.7"><ellipse cx="11.5" cy="11" rx="5" ry="2.2"/><ellipse cx="11.5" cy="8.8" rx="5" ry="2.2"/><ellipse cx="11.5" cy="6.6" rx="5" ry="2.2"/><ellipse cx="11.5" cy="4.4" rx="5" ry="2.2"/><ellipse cx="11.5" cy="2.4" rx="5" ry="2.2"/><ellipse cx="5.5" cy="14.4" rx="5" ry="2.2"/><ellipse cx="5.5" cy="12.2" rx="5" ry="2.2"/><ellipse cx="5.5" cy="10" rx="5" ry="2.2"/><ellipse cx="5.5" cy="7.9" rx="5" ry="2.2"/></g></svg>
<div class="t" style="left:982.5px;top:418.14px;font-size:12px;font-weight:normal;color:#333;letter-spacing:0px;font-style:normal;">SERVICE CHARGE</div>
<div class="t" style="left:1121px;top:418.14px;font-size:12px;font-weight:normal;color:#333;letter-spacing:0px;font-style:normal;transform:scaleX(0.94);transform-origin:0 0;">ACTIVE</div>
<svg class="a" style="left:1189px;top:417.0px;" width="17" height="17" viewBox="0 0 17 17"><path d="M0.6 3.4 L7.6 0.5 L15.6 3.4 L15.6 11.6 L9 15.6 L0.6 11.8 Z" fill="#333"/><path d="M1.9 5 L8.9 7.7 L8.9 13.9 L1.9 11 Z" fill="#fff"/><path d="M3.2 4 L9.6 6.4 M7.2 2.2 L13.4 4.5" stroke="#fff" stroke-width="1.1"/><path d="M4 8 L4.6 10.8 M6.3 9 L6 11.6 M4.3 12 L7.2 13" stroke="#333" stroke-width="1"/></svg>
<div class="t" style="left:1214.5px;top:418.14px;font-size:12px;font-weight:normal;color:#333;letter-spacing:0px;font-style:normal;transform:scaleX(0.9205);transform-origin:0 0;-webkit-text-stroke:0.45px #333;">SERVICE_CHARGE-SERVICE CHARGE</div>
<div class="t" style="left:1479px;top:418.64px;font-size:12px;font-weight:normal;color:#333;letter-spacing:0px;font-style:normal;transform:scaleX(1.025);transform-origin:0 0;">15-07-2010</div>
<div class="t" style="left:1589px;top:418.64px;font-size:12px;font-weight:normal;color:#333;letter-spacing:0px;font-style:normal;transform:scaleX(1.025);transform-origin:0 0;">14-07-2022</div>
<div class="t" style="left:1730.33px;top:418.64px;font-size:12px;font-weight:normal;color:#333;letter-spacing:0px;font-style:normal;transform:scaleX(1.01);transform-origin:0 0;">6,000.00</div>
<div class="p" style="left:929px;top:457px;width:883px;height:171px"></div>
<div class="t" style="left:940px;top:469.4px;font-size:20px;font-weight:normal;color:#333;letter-spacing:-0.05px;font-style:normal;">Roles (+)</div>
<div class="b" style="left:1622px;top:467px;width:74px;height:30px;line-height:30px;color:#333;letter-spacing:0px;font-size:11px;"><span style="display:inline-block;transform:scaleX(0.93)">NEW ROLE</span></div>
<div class="a" style="left:1706px;top:467px;width:96px;height:30px;background:#efeee9;border-radius:4px;overflow:hidden">
<div class="a" style="left:0px;top:0;width:32px;height:30px;background:transparent"></div>
<div class="a" style="left:32px;top:0;width:32px;height:30px;background:transparent"></div>
<div class="a" style="left:64px;top:0;width:32px;height:30px;background:#21b3c1"></div>
</div>
<svg class="a" style="left:1714px;top:475px;" width="16" height="13" viewBox="0 -0.5 16 13"><path d="M0.5 6 C3 1.5 6 0.5 8 0.5 C10 0.5 13 1.5 15.5 6 C13 10.5 10 11.5 8 11.5 C6 11.5 3 10.5 0.5 6Z" fill="#433e38"/><circle cx="8" cy="6" r="2.6" fill="none" stroke="#efeee9" stroke-width="1.4"/><path d="M3 12.5 L13.5 -0.5" stroke="#efeee9" stroke-width="2.6"/><path d="M3 12.5 L13.5 -0.5" stroke="#111" stroke-width="1.4"/></svg>
<svg class="a" style="left:1746px;top:474px;" width="16" height="16" viewBox="0 0 16 16"><path d="M0 2 L9 0 L9 16 L0 14Z" fill="#433e38"/><path d="M2.2 4.5 L6.6 11.5 M6.6 4.5 L2.2 11.5" stroke="#efeee9" stroke-width="1.4"/><rect x="9.5" y="2.5" width="6.5" height="11" fill="#433e38"/><g fill="#efeee9" opacity="0.85"><rect x="10.6" y="4" width="4.4" height="1.1"/><rect x="10.6" y="6.2" width="4.4" height="1.1"/><rect x="10.6" y="8.4" width="4.4" height="1.1"/><rect x="10.6" y="10.6" width="4.4" height="1.1"/></g><rect x="12.3" y="3.5" width="0.9" height="9" fill="#433e38"/></svg>
<svg class="a" style="left:1778px;top:475px;" width="16" height="14" viewBox="0 0 16 14"><g fill="#fff"><circle cx="2" cy="2" r="1.6"/><circle cx="2" cy="7" r="1.6"/><circle cx="2" cy="12" r="1.6"/><rect x="4.8" y="1" width="11" height="2"/><rect x="4.8" y="6" width="11" height="2"/><rect x="4.8" y="11" width="11" height="2"/></g></svg>
<div class="a" style="left:940px;top:507px;width:861px;height:27px;background:#47423c;"></div>
<div class="a" style="left:984px;top:507px;width:1px;height:27px;background:#e4e2de;"></div>
<div class="a" style="left:1128px;top:507px;width:1px;height:27px;background:#e4e2de;"></div>
<div class="a" style="left:1530px;top:507px;width:1px;height:27px;background:#e4e2de;"></div>
<div class="a" style="left:1665px;top:507px;width:1px;height:27px;background:#e4e2de;"></div>
<div class="t" style="left:990px;top:514.64px;font-size:12px;font-weight:bold;color:#fff;letter-spacing:0px;font-style:normal;transform:scaleX(0.94);transform-origin:0 0;">TYPE</div>
<svg class="a" style="left:1118px;top:516px;" width="7" height="11" viewBox="0 0 7 11"><path d="M0 4.5 L3.5 0 L7 4.5Z M0 6 L3.5 10.5 L7 6Z" fill="#b5b2ad"/></svg>
<div class="t" style="left:1134px;top:514.64px;font-size:12px;font-weight:bold;color:#fff;letter-spacing:0px;font-style:normal;transform:scaleX(0.94);transform-origin:0 0;">PARTY</div>
<svg class="a" style="left:1520px;top:516px;" width="7" height="11" viewBox="0 0 7 11"><path d="M0 4.5 L3.5 0 L7 4.5Z M0 6 L3.5 10.5 L7 6Z" fill="#b5b2ad"/></svg>
<div class="t" style="left:1536px;top:514.64px;font-size:12px;font-weight:bold;color:#fff;letter-spacing:0px;font-style:normal;transform:scaleX(0.94);transform-origin:0 0;">START DATE</div>
<svg class="a" style="left:1655px;top:516px;" width="7" height="11" viewBox="0 0 7 11"><path d="M0 4.5 L3.5 0 L7 4.5Z M0 6 L3.5 10.5 L7 6Z" fill="#b5b2ad"/></svg>
<div class="t" style="left:1671px;top:514.64px;font-size:12px;font-weight:bold;color:#fff;letter-spacing:0px;font-style:normal;transform:scaleX(0.94);transform-origin:0 0;">END DATE</div>
<svg class="a" style="left:1791px;top:516px;" width="7" height="11" viewBox="0 0 7 11"><path d="M0 4.5 L3.5 0 L7 4.5Z M0 6 L3.5 10.5 L7 6Z" fill="#b5b2ad"/></svg>
<div class="a" style="left:940px;top:562px;width:861px;height:28px;background:#efeee9;"></div>
<div class="a" style="left:939px;top:534px;width:1px;height:84px;background:#dcdbd6;"></div>
<div class="a" style="left:984px;top:534px;width:1px;height:84px;background:#dcdbd6;"></div>
<div class="a" style="left:1128px;top:534px;width:1px;height:84px;background:#dcdbd6;"></div>
<div class="a" style="left:1530px;top:534px;width:1px;height:84px;background:#dcdbd6;"></div>
<div class="a" style="left:1665px;top:534px;width:1px;height:84px;background:#dcdbd6;"></div>
<div class="a" style="left:1801px;top:534px;width:1px;height:84px;background:#dcdbd6;"></div>
<svg class="a" style="left:944px;top:540.0px;" width="18" height="18" viewBox="0 0 18 18"><g transform="translate(0.6,1.8) rotate(-20 5 5.5)"><path d="M0.5 1 C3 -0.2 7 -0.2 9.5 1 C9.8 6 8 9.8 5 11 C2 9.8 0.2 6 0.5 1Z" fill="#333"/><ellipse cx="3.1" cy="4" rx="1.2" ry="0.8" fill="#fff"/><ellipse cx="6.9" cy="4" rx="1.2" ry="0.8" fill="#fff"/></g><g transform="translate(6.6,6) rotate(22 5 5.5)"><path d="M0.5 1 C3 -0.2 7 -0.2 9.5 1 C9.8 6 8 9.8 5 11 C2 9.8 0.2 6 0.5 1Z" fill="#333" stroke="#fff" stroke-width="0.9"/><ellipse cx="3.1" cy="4" rx="1.2" ry="0.8" fill="#fff"/><ellipse cx="6.9" cy="4" rx="1.2" ry="0.8" fill="#fff"/><path d="M2.6 6.6 C4 8.4 6 8.4 7.4 6.6 C6.8 9.2 3.2 9.2 2.6 6.6Z" fill="#fff"/></g></svg>
<svg class="a" style="left:991px;top:541.0px;" width="14" height="16" viewBox="0 0 14 16"><path d="M0.5 1.5 C4.5 -0.5 9.5 -0.5 13.5 1.5 C14 8 12 13.5 7 15.5 C2 13.5 0 8 0.5 1.5Z" fill="#333"/><g fill="#fff"><path d="M2.5 5.5 L5.5 5 L5.5 6.5 L2.8 6.8Z"/><path d="M11.5 5.5 L8.5 5 L8.5 6.5 L11.2 6.8Z"/><path d="M3.5 9 C5.5 11.5 8.5 11.5 10.5 9 C9.8 12.5 4.2 12.5 3.5 9Z"/></g></svg>
<div class="t" style="left:1015.5px;top:542.14px;font-size:12px;font-weight:normal;color:#333;letter-spacing:0px;font-style:normal;transform:scaleX(0.93);transform-origin:0 0;-webkit-text-stroke:0.45px #333;">LANDLORD</div>
<svg class="a" style="left:1134px;top:540.0px;" width="16" height="16" viewBox="0 0 16 16"><g fill="#333"><circle cx="3.6" cy="4" r="2.4"/><circle cx="12.4" cy="4" r="2.4"/><path d="M0 11 C0 8 1.5 7 3.6 7 C5.7 7 7 8 7 11 Z"/><path d="M9 11 C9 8 10.3 7 12.4 7 C14.5 7 16 8 16 11 Z"/><ellipse cx="8" cy="6.2" rx="3" ry="3.4" stroke="#fff" stroke-width="0.9"/><path d="M2.8 14 C2.8 11 5 10 8 10 C11 10 13.2 11 13.2 14 C13.2 15.3 11 15.8 8 15.8 C5 15.8 2.8 15.3 2.8 14Z" stroke="#fff" stroke-width="0.9"/></g></svg>
<div class="t" style="left:1159px;top:542.14px;font-size:12px;font-weight:normal;color:#333;letter-spacing:0px;font-style:normal;transform:scaleX(0.9494);transform-origin:0 0;-webkit-text-stroke:0.45px #333;">ACME-ACME PROPERTIES INTERNATIONAL</div>
<svg class="a" style="left:944px;top:568.0px;" width="18" height="18" viewBox="0 0 18 18"><g transform="translate(0.6,1.8) rotate(-20 5 5.5)"><path d="M0.5 1 C3 -0.2 7 -0.2 9.5 1 C9.8 6 8 9.8 5 11 C2 9.8 0.2 6 0.5 1Z" fill="#333"/><ellipse cx="3.1" cy="4" rx="1.2" ry="0.8" fill="#fff"/><ellipse cx="6.9" cy="4" rx="1.2" ry="0.8" fill="#fff"/></g><g transform="translate(6.6,6) rotate(22 5 5.5)"><path d="M0.5 1 C3 -0.2 7 -0.2 9.5 1 C9.8 6 8 9.8 5 11 C2 9.8 0.2 6 0.5 1Z" fill="#333" stroke="#fff" stroke-width="0.9"/><ellipse cx="3.1" cy="4" rx="1.2" ry="0.8" fill="#fff"/><ellipse cx="6.9" cy="4" rx="1.2" ry="0.8" fill="#fff"/><path d="M2.6 6.6 C4 8.4 6 8.4 7.4 6.6 C6.8 9.2 3.2 9.2 2.6 6.6Z" fill="#fff"/></g></svg>
<svg class="a" style="left:991px;top:569.0px;" width="14" height="16" viewBox="0 0 14 16"><path d="M0.5 1.5 C4.5 -0.5 9.5 -0.5 13.5 1.5 C14 8 12 13.5 7 15.5 C2 13.5 0 8 0.5 1.5Z" fill="#333"/><g fill="#fff"><path d="M2.5 5.5 L5.5 5 L5.5 6.5 L2.8 6.8Z"/><path d="M11.5 5.5 L8.5 5 L8.5 6.5 L11.2 6.8Z"/><path d="M3.5 9 C5.5 11.5 8.5 11.5 10.5 9 C9.8 12.5 4.2 12.5 3.5 9Z"/></g></svg>
<div class="t" style="left:1015.5px;top:570.14px;font-size:12px;font-weight:normal;color:#333;letter-spacing:0px;font-style:normal;transform:scaleX(0.93);transform-origin:0 0;-webkit-text-stroke:0.45px #333;">MANAGER</div>
<svg class="a" style="left:1134px;top:568.0px;" width="16" height="16" viewBox="0 0 16 16"><g fill="#333"><ellipse cx="7" cy="4.8" rx="3.4" ry="4.2"/><path d="M0.8 13.5 C0.8 10.5 3 9.3 5 9 L7 10 L9 9 C11 9.3 13.2 10.5 13.2 13.5 C13.2 15.2 10.5 15.8 7 15.8 C3.5 15.8 0.8 15.2 0.8 13.5Z"/></g></svg>
<div class="t" style="left:1159px;top:570.14px;font-size:12px;font-weight:normal;color:#333;letter-spacing:0px;font-style:normal;transform:scaleX(0.9542);transform-origin:0 0;-webkit-text-stroke:0.45px #333;">JDOE-DOE, JOHN</div>
<svg class="a" style="left:944px;top:596.0px;" width="18" height="18" viewBox="0 0 18 18"><g transform="translate(0.6,1.8) rotate(-20 5 5.5)"><path d="M0.5 1 C3 -0.2 7 -0.2 9.5 1 C9.8 6 8 9.8 5 11 C2 9.8 0.2 6 0.5 1Z" fill="#333"/><ellipse cx="3.1" cy="4" rx="1.2" ry="0.8" fill="#fff"/><ellipse cx="6.9" cy="4" rx="1.2" ry="0.8" fill="#fff"/></g><g transform="translate(6.6,6) rotate(22 5 5.5)"><path d="M0.5 1 C3 -0.2 7 -0.2 9.5 1 C9.8 6 8 9.8 5 11 C2 9.8 0.2 6 0.5 1Z" fill="#333" stroke="#fff" stroke-width="0.9"/><ellipse cx="3.1" cy="4" rx="1.2" ry="0.8" fill="#fff"/><ellipse cx="6.9" cy="4" rx="1.2" ry="0.8" fill="#fff"/><path d="M2.6 6.6 C4 8.4 6 8.4 7.4 6.6 C6.8 9.2 3.2 9.2 2.6 6.6Z" fill="#fff"/></g></svg>
<svg class="a" style="left:991px;top:597.0px;" width="14" height="16" viewBox="0 0 14 16"><path d="M0.5 1.5 C4.5 -0.5 9.5 -0.5 13.5 1.5 C14 8 12 13.5 7 15.5 C2 13.5 0 8 0.5 1.5Z" fill="#333"/><g fill="#fff"><path d="M2.5 5.5 L5.5 5 L5.5 6.5 L2.8 6.8Z"/><path d="M11.5 5.5 L8.5 5 L8.5 6.5 L11.2 6.8Z"/><path d="M3.5 9 C5.5 11.5 8.5 11.5 10.5 9 C9.8 12.5 4.2 12.5 3.5 9Z"/></g></svg>
<div class="t" style="left:1015.5px;top:598.14px;font-size:12px;font-weight:normal;color:#333;letter-spacing:0px;font-style:normal;transform:scaleX(0.93);transform-origin:0 0;-webkit-text-stroke:0.45px #333;">TENANT</div>
<svg class="a" style="left:1134px;top:596.0px;" width="16" height="16" viewBox="0 0 16 16"><g fill="#333"><circle cx="3.6" cy="4" r="2.4"/><circle cx="12.4" cy="4" r="2.4"/><path d="M0 11 C0 8 1.5 7 3.6 7 C5.7 7 7 8 7 11 Z"/><path d="M9 11 C9 8 10.3 7 12.4 7 C14.5 7 16 8 16 11 Z"/><ellipse cx="8" cy="6.2" rx="3" ry="3.4" stroke="#fff" stroke-width="0.9"/><path d="M2.8 14 C2.8 11 5 10 8 10 C11 10 13.2 11 13.2 14 C13.2 15.3 11 15.8 8 15.8 C5 15.8 2.8 15.3 2.8 14Z" stroke="#fff" stroke-width="0.9"/></g></svg>
<div class="t" style="left:1159px;top:598.14px;font-size:12px;font-weight:normal;color:#333;letter-spacing:0px;font-style:normal;transform:scaleX(0.9633);transform-origin:0 0;-webkit-text-stroke:0.45px #333;">TOPMODEL-TOPMODEL FASHION</div>
<div class="p" style="left:929px;top:637px;width:883px;height:115px"></div>
<div class="t" style="left:940px;top:649.4px;font-size:20px;font-weight:normal;color:#333;letter-spacing:-0.05px;font-style:normal;">Occupancies (+)</div>
<div class="b" style="left:1631px;top:647px;width:65px;height:30px;line-height:30px;color:#333;letter-spacing:0px;font-size:11px;"><span style="display:inline-block;transform:scaleX(0.95)">OCCUPY</span></div>
<div class="a" style="left:1706px;top:647px;width:96px;height:30px;background:#efeee9;border-radius:4px;overflow:hidden">
<div class="a" style="left:0px;top:0;width:32px;height:30px;background:transparent"></div>
<div class="a" style="left:32px;top:0;width:32px;height:30px;background:transparent"></div>
<div class="a" style="left:64px;top:0;width:32px;height:30px;background:#21b3c1"></div>
</div>
<svg class="a" style="left:1714px;top:655px;" width="16" height="13" viewBox="0 -0.5 16 13"><path d="M0.5 6 C3 1.5 6 0.5 8 0.5 C10 0.5 13 1.5 15.5 6 C13 10.5 10 11.5 8 11.5 C6 11.5 3 10.5 0.5 6Z" fill="#433e38"/><circle cx="8" cy="6" r="2.6" fill="none" stroke="#efeee9" stroke-width="1.4"/><path d="M3 12.5 L13.5 -0.5" stroke="#efeee9" stroke-width="2.6"/><path d="M3 12.5 L13.5 -0.5" stroke="#111" stroke-width="1.4"/></svg>
<svg class="a" style="left:1746px;top:654px;" width="16" height="16" viewBox="0 0 16 16"><path d="M0 2 L9 0 L9 16 L0 14Z" fill="#433e38"/><path d="M2.2 4.5 L6.6 11.5 M6.6 4.5 L2.2 11.5" stroke="#efeee9" stroke-width="1.4"/><rect x="9.5" y="2.5" width="6.5" height="11" fill="#433e38"/><g fill="#efeee9" opacity="0.85"><rect x="10.6" y="4" width="4.4" height="1.1"/><rect x="10.6" y="6.2" width="4.4" height="1.1"/><rect x="10.6" y="8.4" width="4.4" height="1.1"/><rect x="10.6" y="10.6" width="4.4" height="1.1"/></g><rect x="12.3" y="3.5" width="0.9" height="9" fill="#433e38"/></svg>
<svg class="a" style="left:1778px;top:655px;" width="16" height="14" viewBox="0 0 16 14"><g fill="#fff"><circle cx="2" cy="2" r="1.6"/><circle cx="2" cy="7" r="1.6"/><circle cx="2" cy="12" r="1.6"/><rect x="4.8" y="1" width="11" height="2"/><rect x="4.8" y="6" width="11" height="2"/><rect x="4.8" y="11" width="11" height="2"/></g></svg>
<div class="a" style="left:940px;top:687px;width:861px;height:27px;background:#47423c;"></div>
<div class="a" style="left:975px;top:687px;width:1px;height:27px;background:#e4e2de;"></div>
<div class="a" style="left:1128px;top:687px;width:1px;height:27px;background:#e4e2de;"></div>
<div class="a" style="left:1237px;top:687px;width:1px;height:27px;background:#e4e2de;"></div>
<div class="a" style="left:1346px;top:687px;width:1px;height:27px;background:#e4e2de;"></div>
<div class="a" style="left:1447px;top:687px;width:1px;height:27px;background:#e4e2de;"></div>
<div class="a" style="left:1605px;top:687px;width:1px;height:27px;background:#e4e2de;"></div>
<div class="a" style="left:1724px;top:687px;width:1px;height:27px;background:#e4e2de;"></div>
<div class="t" style="left:981px;top:694.64px;font-size:12px;font-weight:bold;color:#fff;letter-spacing:0px;font-style:normal;transform:scaleX(0.94);transform-origin:0 0;">UNIT</div>
<svg class="a" style="left:1118px;top:696px;" width="7" height="11" viewBox="0 0 7 11"><path d="M0 4.5 L3.5 0 L7 4.5Z M0 6 L3.5 10.5 L7 6Z" fill="#b5b2ad"/></svg>
<div class="t" style="left:1134px;top:694.64px;font-size:12px;font-weight:bold;color:#fff;letter-spacing:0px;font-style:normal;transform:scaleX(0.94);transform-origin:0 0;">START DATE</div>
<svg class="a" style="left:1227px;top:696px;" width="7" height="11" viewBox="0 0 7 11"><path d="M0 4.5 L3.5 0 L7 4.5Z M0 6 L3.5 10.5 L7 6Z" fill="#b5b2ad"/></svg>
<div class="t" style="left:1243px;top:694.64px;font-size:12px;font-weight:bold;color:#fff;letter-spacing:0px;font-style:normal;transform:scaleX(0.94);transform-origin:0 0;">END DATE</div>
<svg class="a" style="left:1336px;top:696px;" width="7" height="11" viewBox="0 0 7 11"><path d="M0 4.5 L3.5 0 L7 4.5Z M0 6 L3.5 10.5 L7 6Z" fill="#b5b2ad"/></svg>
<div class="t" style="left:1352px;top:694.64px;font-size:12px;font-weight:bold;color:#fff;letter-spacing:0px;font-style:normal;transform:scaleX(0.94);transform-origin:0 0;">SECTOR</div>
<svg class="a" style="left:1437px;top:696px;" width="7" height="11" viewBox="0 0 7 11"><path d="M0 4.5 L3.5 0 L7 4.5Z M0 6 L3.5 10.5 L7 6Z" fill="#b5b2ad"/></svg>
<div class="t" style="left:1453px;top:694.64px;font-size:12px;font-weight:bold;color:#fff;letter-spacing:0px;font-style:normal;transform:scaleX(0.94);transform-origin:0 0;">ACTIVITY</div>
<svg class="a" style="left:1595px;top:696px;" width="7" height="11" viewBox="0 0 7 11"><path d="M0 4.5 L3.5 0 L7 4.5Z M0 6 L3.5 10.5 L7 6Z" fill="#b5b2ad"/></svg>
<div class="t" style="left:1611px;top:694.64px;font-size:12px;font-weight:bold;color:#fff;letter-spacing:0px;font-style:normal;transform:scaleX(0.94);transform-origin:0 0;">BRAND</div>
<svg class="a" style="left:1714px;top:696px;" width="7" height="11" viewBox="0 0 7 11"><path d="M0 4.5 L3.5 0 L7 4.5Z M0 6 L3.5 10.5 L7 6Z" fill="#b5b2ad"/></svg>
<div class="t" style="left:1730px;top:694.64px;font-size:12px;font-weight:bold;color:#fff;letter-spacing:0px;font-style:normal;transform:scaleX(0.94);transform-origin:0 0;">UNIT SIZE</div>
<svg class="a" style="left:1791px;top:696px;" width="7" height="11" viewBox="0 0 7 11"><path d="M0 4.5 L3.5 0 L7 4.5Z M0 6 L3.5 10.5 L7 6Z" fill="#b5b2ad"/></svg>
<div class="a" style="left:939px;top:714px;width:1px;height:28px;background:#dcdbd6;"></div>
<div class="a" style="left:975px;top:714px;width:1px;height:28px;background:#dcdbd6;"></div>
<div class="a" style="left:1128px;top:714px;width:1px;height:28px;background:#dcdbd6;"></div>
<div class="a" style="left:1237px;top:714px;width:1px;height:28px;background:#dcdbd6;"></div>
<div class="a" style="left:1346px;top:714px;width:1px;height:28px;background:#dcdbd6;"></div>
<div class="a" style="left:1447px;top:714px;width:1px;height:28px;background:#dcdbd6;"></div>
<div class="a" style="left:1605px;top:714px;width:1px;height:28px;background:#dcdbd6;"></div>
<div class="a" style="left:1724px;top:714px;width:1px;height:28px;background:#dcdbd6;"></div>
<div class="a" style="left:1801px;top:714px;width:1px;height:28px;background:#dcdbd6;"></div>
<svg class="a" style="left:947px;top:721.0px;" width="13" height="16" viewBox="0 0 13 16"><path d="M1.2 0.5 L1.2 15.5" stroke="#333" stroke-width="1.6"/><path d="M2 1 L12.5 6 L2 10.5 Z" fill="#333"/></svg>
<svg class="a" style="left:981px;top:721.0px;" width="16" height="16" viewBox="0 0 16 16"><rect x="1.2" y="0.6" width="13.4" height="1.7" rx="0.8" fill="#333"/><path d="M1.8 3.2 L14.2 3.2 L15.4 7.8 L0.6 7.8 Z" fill="none" stroke="#333" stroke-width="1.5" stroke-linejoin="round"/><path d="M4.3 3.2 L3.6 7.8 M6.9 3.2 L6.6 7.8 M9.1 3.2 L9.4 7.8 M11.7 3.2 L12.4 7.8" stroke="#333" stroke-width="1.3"/><path d="M2 8.5 L2 15.2 L9.3 15.2 L9.3 8.5" fill="none" stroke="#333" stroke-width="1.6"/><path d="M2.5 11.2 L9 11.2" stroke="#333" stroke-width="1.2" opacity="0"/><path d="M9.3 8.5 L14.2 8.5 L14.2 15.6" fill="none" stroke="#333" stroke-width="1.6"/></svg>
<div class="t" style="left:1006.7px;top:722.14px;font-size:12px;font-weight:normal;color:#333;letter-spacing:0px;font-style:normal;transform:scaleX(0.9682);transform-origin:0 0;-webkit-text-stroke:0.45px #333;">[OXF-001] UNIT 1</div>
<div class="t" style="left:1135px;top:722.64px;font-size:12px;font-weight:normal;color:#333;letter-spacing:0px;font-style:normal;transform:scaleX(1.025);transform-origin:0 0;">15-07-2010</div>
<svg class="a" style="left:1351px;top:721.0px;" width="17" height="16" viewBox="0 0 17 16"><path d="M1.2 1.4 C3 1.4 4 2.2 4.4 3.6 L5.8 9.6 C6.1 10.7 6.8 11.3 8 11.3 L13 11.3 C14 11.3 14.5 10.7 14.9 9.8 L16 6.8" fill="none" stroke="#333" stroke-width="1.6" stroke-linecap="round"/><circle cx="7.4" cy="14.4" r="1.4" fill="#333"/><circle cx="13" cy="14.4" r="1.4" fill="#333"/><path d="M10.3 1.6 L10.3 5.4" stroke="#333" stroke-width="1.7"/><path d="M7.6 4.6 L13 4.6 L10.3 7.9 Z" fill="#333"/></svg>
<div class="t" style="left:1377px;top:722.14px;font-size:12px;font-weight:normal;color:#333;letter-spacing:0px;font-style:normal;transform:scaleX(0.9492);transform-origin:0 0;-webkit-text-stroke:0.45px #333;">FASHION</div>
<svg class="a" style="left:1452px;top:721.0px;" width="17" height="16" viewBox="0 0 17 16"><path d="M1.2 1.4 C3 1.4 4 2.2 4.4 3.6 L5.8 9.6 C6.1 10.7 6.8 11.3 8 11.3 L13 11.3 C14 11.3 14.5 10.7 14.9 9.8 L16 6.8" fill="none" stroke="#333" stroke-width="1.6" stroke-linecap="round"/><circle cx="7.4" cy="14.4" r="1.4" fill="#333"/><circle cx="13" cy="14.4" r="1.4" fill="#333"/><path d="M10.3 1.6 L10.3 5.4" stroke="#333" stroke-width="1.7"/><path d="M7.6 4.6 L13 4.6 L10.3 7.9 Z" fill="#333"/></svg>
<div class="t" style="left:1478px;top:722.14px;font-size:12px;font-weight:normal;color:#333;letter-spacing:0px;font-style:normal;transform:scaleX(0.9561);transform-origin:0 0;-webkit-text-stroke:0.45px #333;">FASHION:WOMEN</div>
<svg class="a" style="left:1611px;top:720.0px;" width="16" height="16" viewBox="0 0 16 16"><rect x="0" y="0" width="16" height="16" rx="3" fill="#333"/><text x="8" y="10.5" font-size="6" font-style="italic" font-weight="bold" fill="#fff" text-anchor="middle" font-family="Liberation Sans">LEGO</text></svg>
<div class="t" style="left:1636.4px;top:722.14px;font-size:12px;font-weight:normal;color:#333;letter-spacing:0px;font-style:normal;transform:scaleX(0.955);transform-origin:0 0;-webkit-text-stroke:0.45px #333;">TOPMODEL</div>
<div class="p" style="left:929px;top:761px;width:883px;height:142px"></div>
<div class="t" style="left:940px;top:772.4px;font-size:20px;font-weight:normal;color:#333;letter-spacing:-0.05px;font-style:normal;">Break Options (+)</div>
<div class="b" style="left:1540px;top:770px;width:124px;height:30px;line-height:30px;color:#333;letter-spacing:0px;font-size:11px;"><span style="display:inline-block;transform:scaleX(0.93)">NEW BREAK OPTION</span></div>
<div class="a" style="left:1674px;top:770px;width:128px;height:30px;background:#efeee9;border-radius:4px;overflow:hidden">
<div class="a" style="left:0px;top:0;width:32px;height:30px;background:transparent"></div>
<div class="a" style="left:32px;top:0;width:32px;height:30px;background:transparent"></div>
<div class="a" style="left:64px;top:0;width:32px;height:30px;background:transparent"></div>
<div class="a" style="left:96px;top:0;width:32px;height:30px;background:#21b3c1"></div>
</div>
<svg class="a" style="left:1682px;top:778px;" width="16" height="13" viewBox="0 -0.5 16 13"><path d="M0.5 6 C3 1.5 6 0.5 8 0.5 C10 0.5 13 1.5 15.5 6 C13 10.5 10 11.5 8 11.5 C6 11.5 3 10.5 0.5 6Z" fill="#433e38"/><circle cx="8" cy="6" r="2.6" fill="none" stroke="#efeee9" stroke-width="1.4"/><path d="M3 12.5 L13.5 -0.5" stroke="#efeee9" stroke-width="2.6"/><path d="M3 12.5 L13.5 -0.5" stroke="#111" stroke-width="1.4"/></svg>
<svg class="a" style="left:1714px;top:777px;" width="16" height="16" viewBox="0 0 16 16"><rect x="0.8" y="2.5" width="14.4" height="13" fill="none" stroke="#433e38" stroke-width="1.4"/><rect x="0.8" y="2.5" width="14.4" height="3" fill="#433e38"/><rect x="3.5" y="0.5" width="1.6" height="3.5" fill="#433e38"/><rect x="10.9" y="0.5" width="1.6" height="3.5" fill="#433e38"/><g fill="#433e38"><rect x="3" y="7" width="2" height="1.6"/><rect x="6" y="7" width="2" height="1.6"/><rect x="9" y="7" width="2" height="1.6"/><rect x="12" y="7" width="1.5" height="1.6"/><rect x="3" y="9.8" width="2" height="1.6"/><rect x="6" y="9.8" width="2" height="1.6"/><rect x="9" y="9.8" width="2" height="1.6"/><rect x="12" y="9.8" width="1.5" height="1.6"/><rect x="3" y="12.5" width="2" height="1.6"/><rect x="6" y="12.5" width="2" height="1.6"/><rect x="9" y="12.5" width="2" height="1.6"/></g></svg>
<svg class="a" style="left:1746px;top:777px;" width="16" height="16" viewBox="0 0 16 16"><path d="M0 2 L9 0 L9 16 L0 14Z" fill="#433e38"/><path d="M2.2 4.5 L6.6 11.5 M6.6 4.5 L2.2 11.5" stroke="#efeee9" stroke-width="1.4"/><rect x="9.5" y="2.5" width="6.5" height="11" fill="#433e38"/><g fill="#efeee9" opacity="0.85"><rect x="10.6" y="4" width="4.4" height="1.1"/><rect x="10.6" y="6.2" width="4.4" height="1.1"/><rect x="10.6" y="8.4" width="4.4" height="1.1"/><rect x="10.6" y="10.6" width="4.4" height="1.1"/></g><rect x="12.3" y="3.5" width="0.9" height="9" fill="#433e38"/></svg>
<svg class="a" style="left:1778px;top:778px;" width="16" height="14" viewBox="0 0 16 14"><g fill="#fff"><circle cx="2" cy="2" r="1.6"/><circle cx="2" cy="7" r="1.6"/><circle cx="2" cy="12" r="1.6"/><rect x="4.8" y="1" width="11" height="2"/><rect x="4.8" y="6" width="11" height="2"/><rect x="4.8" y="11" width="11" height="2"/></g></svg>
<div class="a" style="left:940px;top:810px;width:861px;height:27px;background:#47423c;"></div>
<div class="a" style="left:990px;top:810px;width:1px;height:27px;background:#e4e2de;"></div>
<div class="a" style="left:1095px;top:810px;width:1px;height:27px;background:#e4e2de;"></div>
<div class="a" style="left:1258px;top:810px;width:1px;height:27px;background:#e4e2de;"></div>
<div class="a" style="left:1411px;top:810px;width:1px;height:27px;background:#e4e2de;"></div>
<div class="a" style="left:1576px;top:810px;width:1px;height:27px;background:#e4e2de;"></div>
<div class="t" style="left:996px;top:817.64px;font-size:12px;font-weight:bold;color:#fff;letter-spacing:0px;font-style:normal;transform:scaleX(0.94);transform-origin:0 0;">TYPE</div>
<svg class="a" style="left:1085px;top:819px;" width="7" height="11" viewBox="0 0 7 11"><path d="M0 4.5 L3.5 0 L7 4.5Z M0 6 L3.5 10.5 L7 6Z" fill="#b5b2ad"/></svg>
<div class="t" style="left:1101px;top:817.64px;font-size:12px;font-weight:bold;color:#fff;letter-spacing:0px;font-style:normal;transform:scaleX(0.94);transform-origin:0 0;">EXERCISE TYPE</div>
<svg class="a" style="left:1248px;top:819px;" width="7" height="11" viewBox="0 0 7 11"><path d="M0 4.5 L3.5 0 L7 4.5Z M0 6 L3.5 10.5 L7 6Z" fill="#b5b2ad"/></svg>
<div class="t" style="left:1264px;top:817.64px;font-size:12px;font-weight:bold;color:#fff;letter-spacing:0px;font-style:normal;transform:scaleX(0.94);transform-origin:0 0;">BREAK DATE</div>
<svg class="a" style="left:1401px;top:819px;" width="7" height="11" viewBox="0 0 7 11"><path d="M0 4.5 L3.5 0 L7 4.5Z M0 6 L3.5 10.5 L7 6Z" fill="#b5b2ad"/></svg>
<div class="t" style="left:1417px;top:817.64px;font-size:12px;font-weight:bold;color:#fff;letter-spacing:0px;font-style:normal;transform:scaleX(0.94);transform-origin:0 0;">EXERCISE DATE</div>
<svg class="a" style="left:1566px;top:819px;" width="7" height="11" viewBox="0 0 7 11"><path d="M0 4.5 L3.5 0 L7 4.5Z M0 6 L3.5 10.5 L7 6Z" fill="#b5b2ad"/></svg>
<div class="t" style="left:1582px;top:817.64px;font-size:12px;font-weight:bold;color:#fff;letter-spacing:0px;font-style:normal;transform:scaleX(0.94);transform-origin:0 0;">NOTIFICATION PERIOD</div>
<svg class="a" style="left:1791px;top:819px;" width="7" height="11" viewBox="0 0 7 11"><path d="M0 4.5 L3.5 0 L7 4.5Z M0 6 L3.5 10.5 L7 6Z" fill="#b5b2ad"/></svg>
<div class="a" style="left:940px;top:865px;width:861px;height:28px;background:#efeee9;"></div>
<div class="a" style="left:939px;top:837px;width:1px;height:56px;background:#dcdbd6;"></div>
<div class="a" style="left:990px;top:837px;width:1px;height:56px;background:#dcdbd6;"></div>
<div class="a" style="left:1095px;top:837px;width:1px;height:56px;background:#dcdbd6;"></div>
<div class="a" style="left:1258px;top:837px;width:1px;height:56px;background:#dcdbd6;"></div>
<div class="a" style="left:1411px;top:837px;width:1px;height:56px;background:#dcdbd6;"></div>
<div class="a" style="left:1576px;top:837px;width:1px;height:56px;background:#dcdbd6;"></div>
<div class="a" style="left:1801px;top:837px;width:1px;height:56px;background:#dcdbd6;"></div>
<svg class="a" style="left:945px;top:843.0px;" width="16" height="16" viewBox="0 0 16 16"><rect x="0" y="0" width="16" height="16" rx="3" fill="#333"/><path d="M5 5 L11 11 M11 5 L5 11" stroke="#fff" stroke-width="2.2"/></svg>
<div class="t" style="left:996.6px;top:844.64px;font-size:12px;font-weight:normal;color:#333;letter-spacing:0px;font-style:normal;transform:scaleX(0.94);transform-origin:0 0;">FIXED</div>
<div class="t" style="left:1101px;top:844.64px;font-size:12px;font-weight:normal;color:#333;letter-spacing:0px;font-style:normal;transform:scaleX(0.965);transform-origin:0 0;">MUTUAL</div>
<div class="t" style="left:1264.5px;top:845.64px;font-size:12px;font-weight:normal;color:#333;letter-spacing:0px;font-style:normal;transform:scaleX(1.025);transform-origin:0 0;">15-07-2015</div>
<div class="t" style="left:1417.5px;top:845.64px;font-size:12px;font-weight:normal;color:#333;letter-spacing:0px;font-style:normal;transform:scaleX(1.025);transform-origin:0 0;">15-01-2015</div>
<div class="t" style="left:1582px;top:844.14px;font-size:12px;font-weight:normal;color:#333;letter-spacing:0px;font-style:normal;">6M</div>
<svg class="a" style="left:945px;top:871.0px;" width="16" height="16" viewBox="0 0 16 16"><rect x="0" y="0" width="16" height="16" rx="3" fill="#333"/><path d="M5 5 L11 11 M11 5 L5 11" stroke="#fff" stroke-width="2.2"/></svg>
<div class="t" style="left:996.6px;top:872.64px;font-size:12px;font-weight:normal;color:#333;letter-spacing:0px;font-style:normal;transform:scaleX(0.94);transform-origin:0 0;">ROLLING</div>
<div class="t" style="left:1101px;top:872.64px;font-size:12px;font-weight:normal;color:#333;letter-spacing:0px;font-style:normal;transform:scaleX(0.965);transform-origin:0 0;">MUTUAL</div>
<div class="t" style="left:1264.5px;top:873.64px;font-size:12px;font-weight:normal;color:#333;letter-spacing:0px;font-style:normal;transform:scaleX(1.025);transform-origin:0 0;">15-07-2022</div>
<div class="t" style="left:1417.5px;top:873.64px;font-size:12px;font-weight:normal;color:#333;letter-spacing:0px;font-style:normal;transform:scaleX(1.025);transform-origin:0 0;">15-01-2022</div>
<div class="t" style="left:1582px;top:872.14px;font-size:12px;font-weight:normal;color:#333;letter-spacing:0px;font-style:normal;">6M</div>
<div class="p" style="left:929px;top:912px;width:883px;height:50px"></div>
<div class="t" style="left:940px;top:923.4px;font-size:20px;font-weight:normal;color:#333;letter-spacing:-0.05px;font-style:normal;">Invoices (+)</div>
<div class="a" style="left:1674px;top:922px;width:128px;height:30px;background:#efeee9;border-radius:4px;overflow:hidden">
<div class="a" style="left:0px;top:0;width:32px;height:30px;background:#21b3c1"></div>
<div class="a" style="left:32px;top:0;width:32px;height:30px;background:transparent"></div>
<div class="a" style="left:64px;top:0;width:32px;height:30px;background:transparent"></div>
<div class="a" style="left:96px;top:0;width:32px;height:30px;background:transparent"></div>
</div>
<svg class="a" style="left:1682px;top:930px;" width="16" height="13" viewBox="0 -0.5 16 13"><path d="M0.5 6 C3 1.5 6 0.5 8 0.5 C10 0.5 13 1.5 15.5 6 C13 10.5 10 11.5 8 11.5 C6 11.5 3 10.5 0.5 6Z" fill="#fff"/><circle cx="8" cy="6" r="2.6" fill="none" stroke="#21b3c1" stroke-width="1.4"/><path d="M3 12.5 L13.5 -0.5" stroke="#21b3c1" stroke-width="2.6"/><path d="M3 12.5 L13.5 -0.5" stroke="#fff" stroke-width="1.4"/></svg>
<svg class="a" style="left:1714px;top:929px;" width="16" height="16" viewBox="0 0 16 16"><path d="M0 2 L9 0 L9 16 L0 14Z" fill="#433e38"/><path d="M2.2 4.5 L6.6 11.5 M6.6 4.5 L2.2 11.5" stroke="#efeee9" stroke-width="1.4"/><rect x="9.5" y="2.5" width="6.5" height="11" fill="#433e38"/><g fill="#efeee9" opacity="0.85"><rect x="10.6" y="4" width="4.4" height="1.1"/><rect x="10.6" y="6.2" width="4.4" height="1.1"/><rect x="10.6" y="8.4" width="4.4" height="1.1"/><rect x="10.6" y="10.6" width="4.4" height="1.1"/></g><rect x="12.3" y="3.5" width="0.9" height="9" fill="#433e38"/></svg>
<svg class="a" style="left:1749px;top:930px;" width="11" height="14" viewBox="0 0 11 14"><path d="M0.5 0.5 L10 0.5 L10 2.8 L4 2.8 L7.2 7 L4 11.2 L10 11.2 L10 13.5 L0.5 13.5 L0.5 12 L4.5 7 L0.5 2 Z" fill="#433e38"/></svg>
<svg class="a" style="left:1778px;top:930px;" width="16" height="14" viewBox="0 0 16 14"><g fill="#433e38"><circle cx="2" cy="2" r="1.6"/><circle cx="2" cy="7" r="1.6"/><circle cx="2" cy="12" r="1.6"/><rect x="4.8" y="1" width="11" height="2"/><rect x="4.8" y="6" width="11" height="2"/><rect x="4.8" y="11" width="11" height="2"/></g></svg>
</body></html>
